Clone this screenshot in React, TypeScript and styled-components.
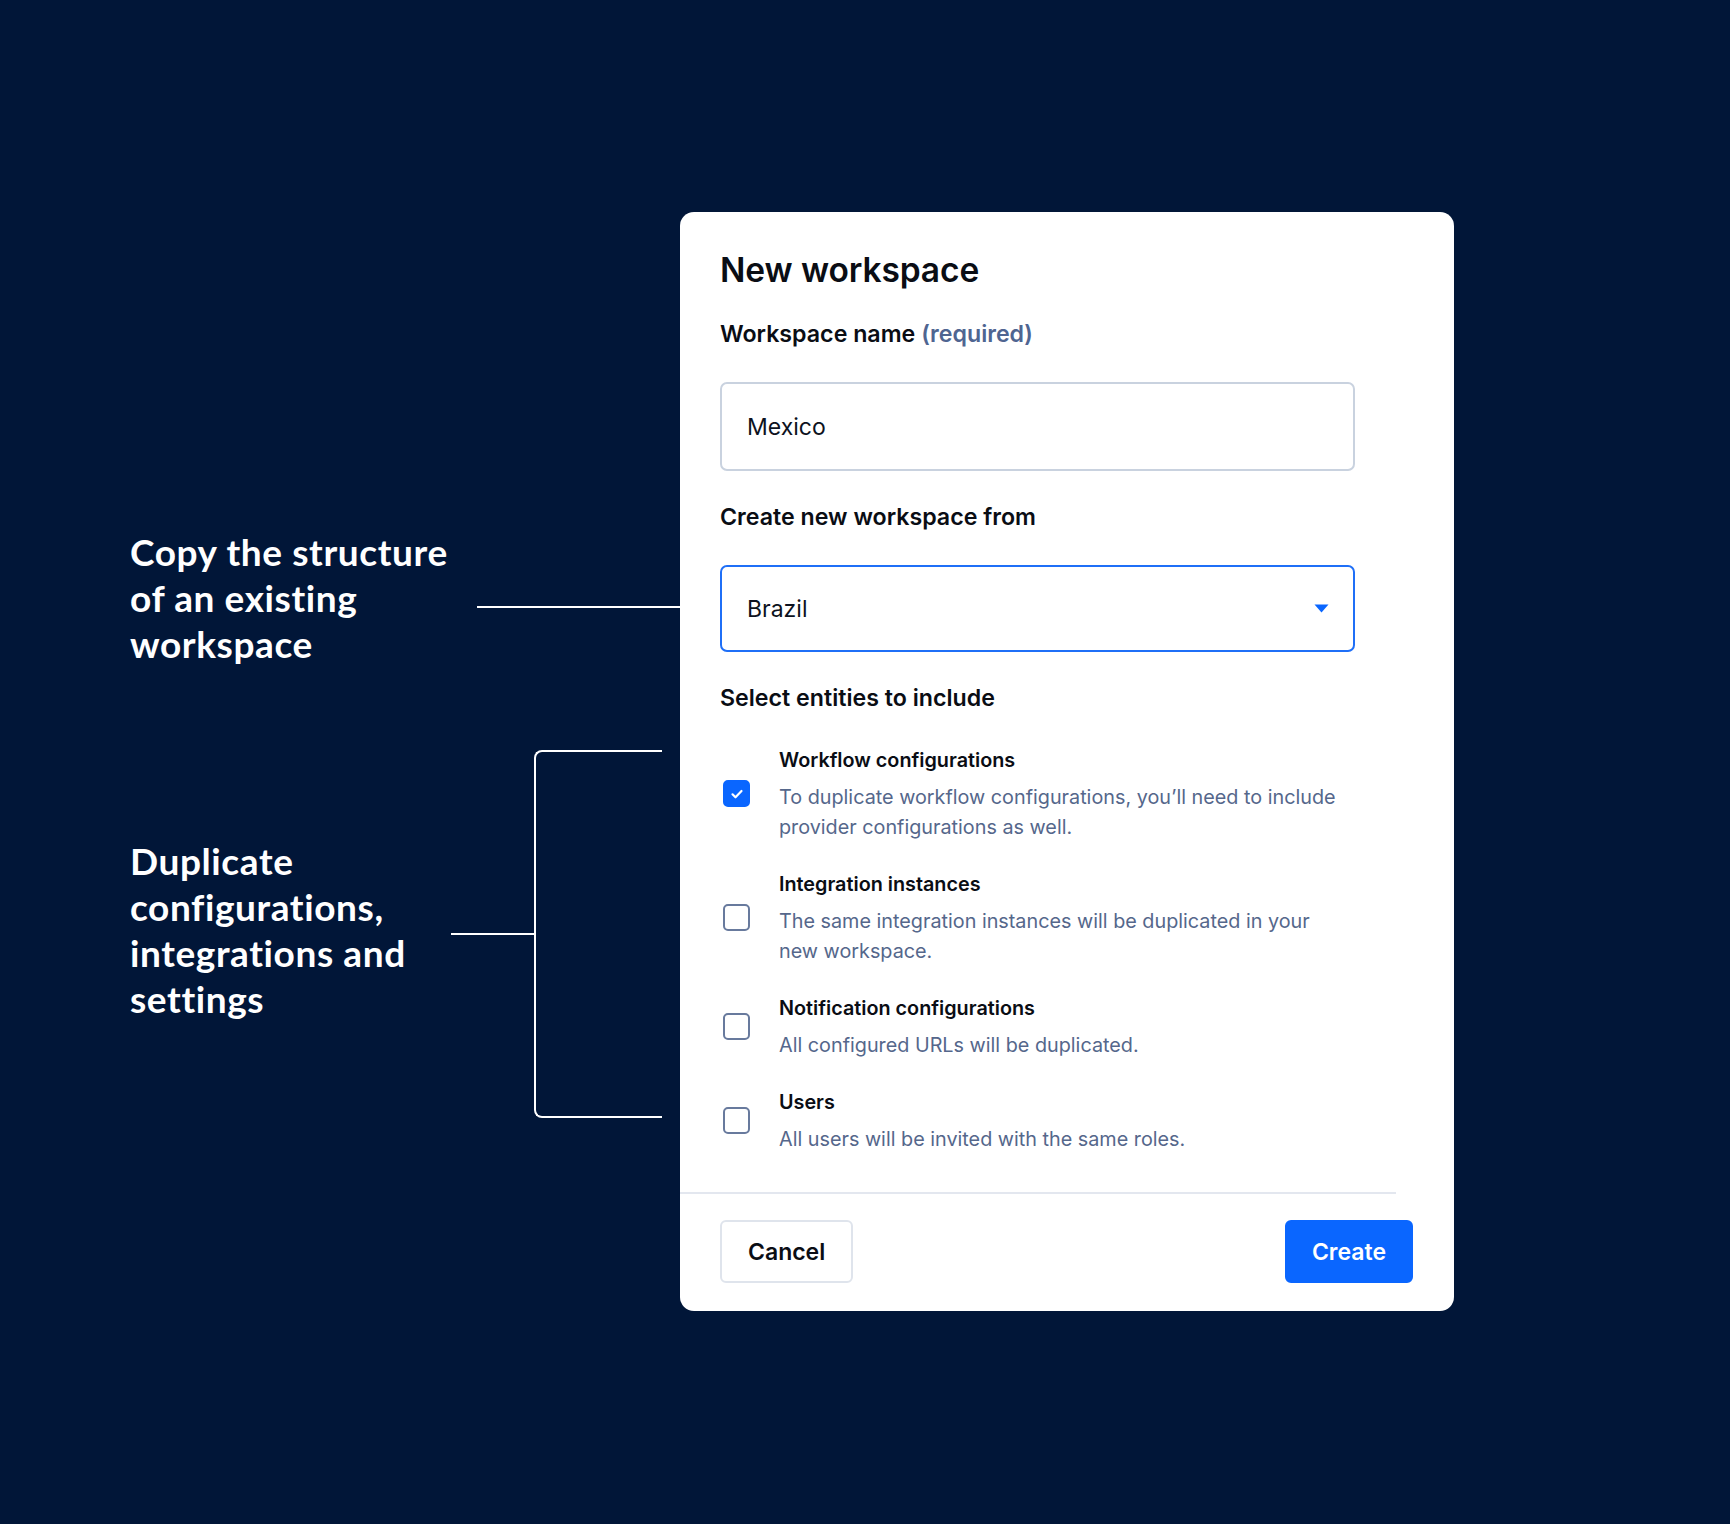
import React from 'react'
import styled, { createGlobalStyle } from 'styled-components'

const entities = [
  {
    title: 'Workflow configurations',
    lines: ['To duplicate workflow configurations, you’ll need to include', 'provider configurations as well.'],
    checked: true,
  },
  {
    title: 'Integration instances',
    lines: ['The same integration instances will be duplicated in your', 'new workspace.'],
    checked: false,
  },
  {
    title: 'Notification configurations',
    lines: ['All configured URLs will be duplicated.'],
    checked: false,
  },
  {
    title: 'Users',
    lines: ['All users will be invited with the same roles.'],
    checked: false,
  },
]

function App() {
  return (
    <>
      <GlobalStyle/>
      <Page>
        <Notes>
          <Note>
            <NoteText $width={347}>
              Copy the structure<br/>of an existing<br/>workspace
            </NoteText>
            <Connector $offset={18}/>
          </Note>
          <Note $top={83}>
            <NoteText $width={321} $lift={9}>
              Duplicate<br/>configurations,<br/>integrations and<br/>settings
            </NoteText>
            <Stub/>
            <Bracket/>
          </Note>
        </Notes>

        <Card>
          <Title>New workspace</Title>

          <Label $top={29}>Workspace name <Muted>(required)</Muted></Label>
          <Field $top={33} $height={89}>Mexico</Field>

          <Label $top={31}>Create new workspace from</Label>
          <Field $top={33} $height={87} $active>
            Brazil
            <Caret width="15" height="9" viewBox="0 0 15 9">
              <path d="M0.5 0.5h14L7.5 8.5z" fill="#0a66ff"/>
            </Caret>
          </Field>

          <Label $top={31}>Select entities to include</Label>
          <EntityList>
            {entities.map(e => (
              <Entity key={e.title}>
                <Checkbox $checked={e.checked}>
                  {e.checked && (
                    <svg width="16" height="16" viewBox="0 0 16 16">
                      <path d="M3.5 8.3l3 3 6-6.3" fill="none" stroke="#fff" strokeWidth="2.2" strokeLinecap="round" strokeLinejoin="round"/>
                    </svg>
                  )}
                </Checkbox>
                <div>
                  <EntityTitle>{e.title}</EntityTitle>
                  <EntityDesc>
                    {e.lines.map((l, i) => (
                      <React.Fragment key={i}>
                        {i > 0 && <br/>}
                        {l}
                      </React.Fragment>
                    ))}
                  </EntityDesc>
                </div>
              </Entity>
            ))}
          </EntityList>

          <Divider/>

          <Footer>
            <Button>Cancel</Button>
            <Button $primary>Create</Button>
          </Footer>
        </Card>
      </Page>
    </>
  )
}

const GlobalStyle = createGlobalStyle`
  html, body {
    margin: 0;
    padding: 0;
    background: #011638;
  }
  body {
    font-family: Inter, "Liberation Sans", sans-serif;
  }
`

const Page = styled.main`
  display: flex;
  align-items: flex-start;
  width: 1730px;
  height: 1524px;
  box-sizing: border-box;
  padding: 212px 0 0 130px;
  background: #011638;
`

const Notes = styled.div`
  width: 550px;
  padding-top: 317px;
  display: flex;
  flex-direction: column;
`

const Note = styled.div<{ $top?: number }>`
  display: flex;
  align-items: center;
  margin-top: ${p => p.$top || 0}px;
`

const NoteText = styled.p<{ $width: number; $lift?: number }>`
  width: ${p => p.$width}px;
  flex: none;
  margin: 0 0 ${p => p.$lift || 0}px;
  font-family: Lato, "Open Sans", sans-serif;
  font-weight: 700;
  font-size: 37px;
  line-height: 46px;
  letter-spacing: 0.6px;
  color: #fff;
`

const Connector = styled.div<{ $offset: number }>`
  flex: 1;
  height: 2px;
  margin-top: ${p => p.$offset}px;
  background: #fff;
`

const Stub = styled.div`
  width: 83px;
  height: 2px;
  background: #fff;
`

const Bracket = styled.div`
  width: 128px;
  height: 368px;
  box-sizing: border-box;
  border: 2px solid #fff;
  border-right: none;
  border-radius: 8px 0 0 8px;
`

const Card = styled.section`
  width: 774px;
  box-sizing: border-box;
  padding: 38px 41px 28px 40px;
  background: #fff;
  border-radius: 14px;
  color: #0a0d14;
`

const Title = styled.h1`
  margin: 0;
  font-size: 33.5px;
  line-height: 40px;
  font-weight: 600;
  letter-spacing: -0.1px;
`

const Label = styled.div<{ $top: number }>`
  margin-top: ${p => p.$top}px;
  font-size: 23.2px;
  line-height: 30px;
  font-weight: 600;
`

const Muted = styled.span`
  color: #4f6591;
`

const Field = styled.div<{ $top: number; $height: number; $active?: boolean }>`
  margin-top: ${p => p.$top}px;
  width: 635px;
  height: ${p => p.$height}px;
  box-sizing: border-box;
  display: flex;
  align-items: center;
  justify-content: space-between;
  padding: 0 24px 0 25px;
  border: 2px solid ${p => (p.$active ? '#1f6ff7' : '#c9d2df')};
  border-radius: 7px;
  font-size: 23px;
  color: #0d1220;
`

const Caret = styled.svg`
  display: block;
`

const EntityList = styled.div`
  margin-top: 32px;
  display: flex;
  flex-direction: column;
  gap: 27px;
`

const Entity = styled.div`
  display: grid;
  grid-template-columns: 26px 1fr;
  column-gap: 30px;
  align-items: center;
  padding-left: 3px;
`

const Checkbox = styled.span<{ $checked: boolean }>`
  width: 27px;
  height: 27px;
  box-sizing: border-box;
  display: flex;
  align-items: center;
  justify-content: center;
  border: 2px solid ${p => (p.$checked ? '#0a66ff' : '#687a9d')};
  border-radius: 5px;
  background: ${p => (p.$checked ? '#0a66ff' : '#fff')};
`

const EntityTitle = styled.div`
  font-size: 19.8px;
  line-height: 30px;
  font-weight: 600;
`

const EntityDesc = styled.div`
  margin-top: 7px;
  font-size: 19.8px;
  line-height: 30px;
  color: #55678b;
`

const Divider = styled.hr`
  margin: 38px 0 0 -40px;
  width: 716px;
  height: 2px;
  border: none;
  background: #e3e7ef;
`

const Footer = styled.div`
  margin-top: 26px;
  display: flex;
  justify-content: space-between;
`

const Button = styled.button<{ $primary?: boolean }>`
  height: 63px;
  padding: 0 ${p => (p.$primary ? 25 : 26)}px;
  box-sizing: border-box;
  border: 2px solid ${p => (p.$primary ? '#0a66ff' : '#dfe4ec')};
  border-radius: 6px;
  background: ${p => (p.$primary ? '#0a66ff' : '#fff')};
  color: ${p => (p.$primary ? '#fff' : '#0a0d14')};
  font-family: Inter, "Liberation Sans", sans-serif;
  font-size: 23px;
  font-weight: 600;
`

export default App
